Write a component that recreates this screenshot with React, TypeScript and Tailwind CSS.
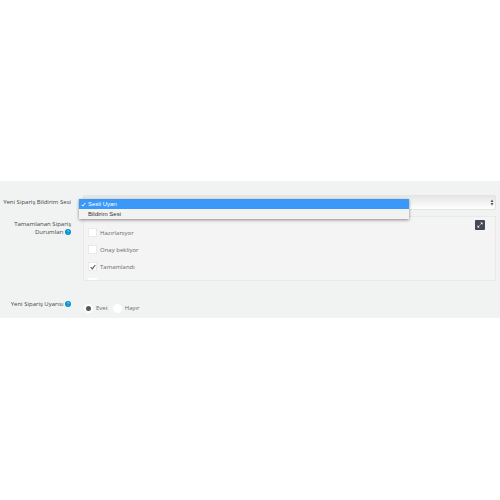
import { useState } from "react";

const sounds = ["Sesli Uyarı", "Bildirim Sesi"];
const statuses = ["Hazırlanıyor", "Onay bekliyor", "Tamamlandı"];
const answers = ["Evet", "Hayır"];

function HelpIcon() {
  return (
    <svg viewBox="0 0 12 12" className="inline-block h-[6px] w-[6px] align-[-1px]" aria-hidden="true">
      <circle cx="6" cy="6" r="6" fill="#0090cc" />
      <path d="M4.4 4.8a1.6 1.5 0 1 1 2.4 1.3Q6 6.500 6 7.200M6 8.400v1.200" fill="none" stroke="#fff" strokeWidth="1" />
    </svg>
  );
}

function Tick({ className }: { className: string }) {
  return (
    <svg viewBox="0 0 10 10" className={className} aria-hidden="true">
      <path d="M1.2 5.4 3.9 8.2 8.8 1.6" fill="none" stroke="currentColor" strokeWidth="1.8" />
    </svg>
  );
}

export default function App() {
  const [sound, setSound] = useState(sounds[0]);
  const [checked, setChecked] = useState(["Tamamlandı"]);
  const [answer, setAnswer] = useState("Evet");

  const toggle = (name: string) =>
    setChecked(checked.includes(name) ? checked.filter((c) => c !== name) : [...checked, name]);

  return (
    <main className="min-h-screen bg-white pt-[181px] font-['Open_Sans','Noto_Sans',sans-serif] text-[6px] leading-[8px] text-[#6a6a6a]">
      <form className="grid grid-cols-[71px_1fr] gap-x-3 bg-[#f1f3f3] pt-3.5 pr-1 pb-[5px]">
        <label htmlFor="sound" className="pt-[3px] text-right font-medium whitespace-nowrap text-[#444]">
          Yeni Sipariş Bildirim Sesi
        </label>
        <div className="relative">
          <select
            id="sound"
            value={sound}
            onChange={(e) => setSound(e.target.value)}
            className="block h-[15px] w-full appearance-none rounded-[1px] border border-[#e3e5e5] bg-linear-to-b from-[#e6e6e6] to-white px-1 text-transparent"
          >
            {sounds.map((s) => (
              <option key={s}>{s}</option>
            ))}
          </select>
          <svg viewBox="0 0 6 12" className="pointer-events-none absolute top-1 right-0.5 h-[7px] w-[4px]" aria-hidden="true">
            <path d="M3 1 5.500 5H.5zM3 11 .5 7h5z" fill="#555" />
          </svg>
          <ul
            role="listbox"
            aria-label="Yeni Sipariş Bildirim Sesi"
            className="absolute top-1 right-[87px] -left-1 z-10 bg-[#f2f2f2] font-['Liberation_Sans',sans-serif] text-[#333] shadow-[0_1px_3px_rgba(0,0,0,0.45)]"
          >
            {sounds.map((s) => (
              <li
                key={s}
                role="option"
                aria-selected={s === sound}
                onClick={() => setSound(s)}
                className="flex h-[10px] items-center gap-0.5 pl-0.5 aria-selected:bg-[#3a99f8] aria-selected:text-white"
              >
                <span className="w-[5px]">{s === sound && <Tick className="h-[5px] w-[5px]" />}</span>
                {s}
              </li>
            ))}
          </ul>
        </div>

        <div id="statuses" className="mt-2.5 text-right font-medium text-[#444]">
          Tamamlanan Sipariş Durumları <HelpIcon />
        </div>
        <div
          role="group"
          aria-labelledby="statuses"
          className="relative mt-1.5 h-[65px] overflow-hidden border border-[#e8eaea] bg-[#f4f4f4] pt-[11px] pl-1"
        >
          <div className="flex flex-col gap-2">
            {statuses.map((name) => (
              <label key={name} className="flex h-[9px] items-center gap-[3px]">
                <span className="relative flex h-[9px] w-[9px] items-center justify-center">
                  <input
                    type="checkbox"
                    checked={checked.includes(name)}
                    onChange={() => toggle(name)}
                    className="absolute inset-0 appearance-none border border-[#e9e9e9] bg-white"
                  />
                  {checked.includes(name) && <Tick className="relative h-[6px] w-[6px] text-[#555]" />}
                </span>
                {name}
              </label>
            ))}
            <input
              type="checkbox"
              aria-label="Diğer"
              className="-mt-px h-[9px] w-[9px] appearance-none bg-white"
            />
          </div>
          <button
            type="button"
            aria-label="Genişlet"
            className="absolute top-[3px] right-2.5 flex h-[10px] w-[10px] items-center justify-center rounded-[1px] bg-[#434a56] text-white"
          >
            <svg viewBox="0 0 12 12" className="h-[6px] w-[6px]" aria-hidden="true">
              <path d="M7 5 10 2M5 7 2 10" stroke="currentColor" strokeWidth="1.6" />
              <path d="M6.500 1h4.500v4.500zM1 6.500v4.500h4.500z" fill="currentColor" />
            </svg>
          </button>
        </div>

        <div id="alert" className="mt-[19px] text-right font-medium whitespace-nowrap text-[#444]">
          Yeni Sipariş Uyarısı <HelpIcon />
        </div>
        <div role="radiogroup" aria-labelledby="alert" className="mt-[22px] flex items-center gap-[5px] pl-px">
          {answers.map((name) => (
            <label key={name} className="flex h-[10px] items-center gap-[3px]">
              <input
                type="radio"
                name="alert"
                checked={answer === name}
                onChange={() => setAnswer(name)}
                className="h-[9px] w-[9px] appearance-none rounded-full border-2 border-white bg-white checked:bg-[#555]"
              />
              {name}
            </label>
          ))}
        </div>
      </form>
    </main>
  );
}
